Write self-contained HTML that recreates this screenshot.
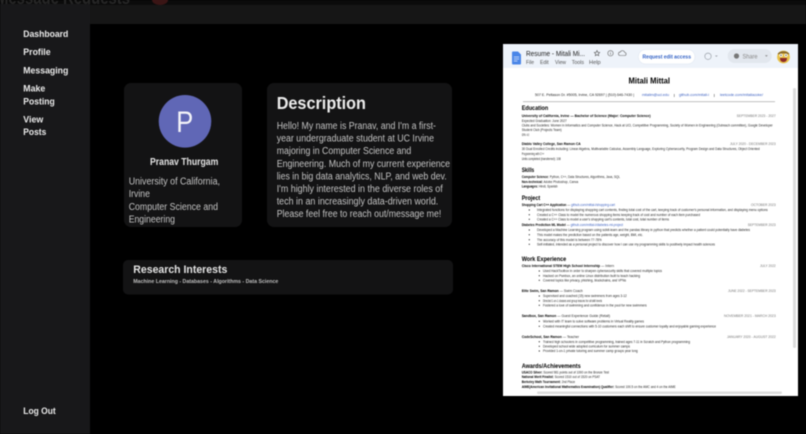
<!DOCTYPE html>
<html lang="en">
<head>
<meta charset="utf-8">
<title>Profile</title>
<style>
html,body{margin:0;padding:0;width:806px;height:434px;overflow:hidden;background:#000}
svg{display:block;position:absolute;left:0;top:0}
text{font-family:"Liberation Sans",sans-serif}
.main{filter:blur(.4px)}
.res{filter:blur(.4px)}
.b{font-weight:700;fill:#000;font-size:3.6px}
.t{fill:#1e1e1e;font-size:3.4px}
.d{fill:#777;font-size:3.3px}
.h{font-weight:700;fill:#000;font-size:6.6px}
.nav{font-weight:700;fill:#ececec;font-size:9.5px}
.body{fill:#c4c4c4;font-size:10px}
.m{fill:#555;font-size:5.8px}
</style>
</head>
<body>
<svg width="806" height="434" viewBox="0 0 806 434" xmlns="http://www.w3.org/2000/svg">
<g class="main">
<rect width="806" height="434" fill="#000"/>
<rect x="0" y="0" width="806" height="5" fill="#0b0b0b"/>
<text x="-4" y="4" font-size="19" font-weight="700" fill="#262626" textLength="134" lengthAdjust="spacingAndGlyphs">Message Requests</text>
<ellipse cx="160" cy="0" rx="8" ry="5" fill="#3a1515"/>
<rect x="90" y="5" width="716" height="19" fill="#161616"/>
<rect x="0" y="4" width="90" height="430" fill="#18181a"/>

<text class="nav" x="23.3" y="37.1" textLength="45" lengthAdjust="spacingAndGlyphs">Dashboard</text>
<text class="nav" x="23.3" y="55.1" textLength="27.3" lengthAdjust="spacingAndGlyphs">Profile</text>
<text class="nav" x="23.3" y="73.7" textLength="45" lengthAdjust="spacingAndGlyphs">Messaging</text>
<text class="nav" x="23.3" y="91.3" textLength="22" lengthAdjust="spacingAndGlyphs">Make</text>
<text class="nav" x="23.3" y="104.3" textLength="31.4" lengthAdjust="spacingAndGlyphs">Posting</text>
<text class="nav" x="23.3" y="122.3" textLength="20" lengthAdjust="spacingAndGlyphs">View</text>
<text class="nav" x="23.3" y="135.1" textLength="23" lengthAdjust="spacingAndGlyphs">Posts</text>
<text class="nav" x="23.3" y="414.1" textLength="32.4" lengthAdjust="spacingAndGlyphs">Log Out</text>

<rect x="124" y="83" width="118" height="144" rx="7" fill="#131314"/>
<circle cx="185" cy="121.3" r="26.3" fill="#6067b6"/>
<text x="176.2" y="131.8" font-size="30" fill="#f2f2f8" textLength="17" lengthAdjust="spacingAndGlyphs">P</text>
<text x="150" y="164.8" font-size="9.8" font-weight="700" fill="#e4e4e4" textLength="68.3" lengthAdjust="spacingAndGlyphs">Pranav Thurgam</text>
<text class="body" x="128.7" y="184.5" textLength="91.3" lengthAdjust="spacingAndGlyphs">University of California,</text>
<text class="body" x="128.7" y="197.1" textLength="21.3" lengthAdjust="spacingAndGlyphs">Irvine</text>
<text class="body" x="128.7" y="209.8" textLength="89.3" lengthAdjust="spacingAndGlyphs">Computer Science and</text>
<text class="body" x="128.7" y="222.5" textLength="46.3" lengthAdjust="spacingAndGlyphs">Engineering</text>

<rect x="267" y="83" width="185" height="144" rx="7" fill="#131314"/>
<text x="276.7" y="108.9" font-size="17.5" font-weight="700" fill="#ececec" textLength="89.3" lengthAdjust="spacingAndGlyphs">Description</text>
<text class="body" x="276.7" y="128.8" textLength="159.3" lengthAdjust="spacingAndGlyphs">Hello! My name is Pranav, and I'm a first-</text>
<text class="body" x="276.7" y="141.5" textLength="157.3" lengthAdjust="spacingAndGlyphs">year undergraduate student at UC Irvine</text>
<text class="body" x="276.7" y="154.1" textLength="134.6" lengthAdjust="spacingAndGlyphs">majoring in Computer Science and</text>
<text class="body" x="276.7" y="166.8" textLength="173.3" lengthAdjust="spacingAndGlyphs">Engineering. Much of my current experience</text>
<text class="body" x="276.7" y="179.5" textLength="170" lengthAdjust="spacingAndGlyphs">lies in big data analytics, NLP, and web dev.</text>
<text class="body" x="276.7" y="191.8" textLength="166" lengthAdjust="spacingAndGlyphs">I'm highly interested in the diverse roles of</text>
<text class="body" x="276.7" y="204.5" textLength="161.6" lengthAdjust="spacingAndGlyphs">tech in an increasingly data-driven world.</text>
<text class="body" x="276.7" y="217.1" textLength="164.6" lengthAdjust="spacingAndGlyphs">Please feel free to reach out/message me!</text>

<rect x="123" y="260" width="330" height="34.5" rx="5" fill="#131314"/>
<text x="133.3" y="272.8" font-size="10.8" font-weight="700" fill="#e4e4e4" textLength="94" lengthAdjust="spacingAndGlyphs">Research Interests</text>
<text x="133.3" y="282.8" font-size="5" font-weight="700" fill="#bdbdbd" textLength="145" lengthAdjust="spacingAndGlyphs">Machine Learning - Databases - Algorithms - Data Science</text>
</g>

<g class="res">
<rect x="503" y="44" width="295" height="352" fill="#fff"/>
<rect x="503" y="44" width="295" height="24" fill="#eef3fa"/>
<path d="M512 52.5a1 1 0 0 1 1-1h5l3 3v9a1 1 0 0 1-1 1h-7a1 1 0 0 1-1-1z" fill="#4a86e8"/>
<path d="M513.8 57h5.4M513.8 59h5.4M513.8 61h3.6" stroke="#dfe9fb" stroke-width=".7"/>
<text x="526" y="55.8" font-size="7.4" fill="#222" textLength="59" lengthAdjust="spacingAndGlyphs">Resume - Mitali Mi...</text>
<text class="m" x="526" y="64" textLength="8" lengthAdjust="spacingAndGlyphs">File</text>
<text class="m" x="540" y="64" textLength="8.7" lengthAdjust="spacingAndGlyphs">Edit</text>
<text class="m" x="555" y="64" textLength="11" lengthAdjust="spacingAndGlyphs">View</text>
<text class="m" x="571.7" y="64" textLength="12.3" lengthAdjust="spacingAndGlyphs">Tools</text>
<text class="m" x="589" y="64" textLength="11.7" lengthAdjust="spacingAndGlyphs">Help</text>
<path d="M597 50.5l.8 1.8 1.9.2-1.4 1.3.4 1.9-1.7-1-1.7 1 .4-1.9-1.4-1.3 1.9-.2z" fill="none" stroke="#555" stroke-width=".6"/>
<circle cx="610.5" cy="53.3" r="2.7" fill="none" stroke="#666" stroke-width=".6"/>
<path d="M610.5 52.8v2M610.5 51.7v.5" stroke="#666" stroke-width=".6"/>
<path d="M620 55.5h4.5a1.5 1.5 0 0 0 .2-3 2.3 2.3 0 0 0-4.4-.4 1.7 1.7 0 0 0-.3 3.4z" fill="none" stroke="#666" stroke-width=".6"/>
<rect x="638.3" y="49.5" width="56.7" height="14.5" rx="7.2" fill="#fff" stroke="#dbe3f0" stroke-width=".5"/>
<text x="642.5" y="58.5" font-size="5.8" font-weight="700" fill="#2f5fc4" textLength="48.5" lengthAdjust="spacingAndGlyphs">Request edit access</text>
<circle cx="708" cy="56.3" r="3.2" fill="none" stroke="#9aa0a8" stroke-width=".7"/>
<path d="M715 55.5l1.4 1.4 1.4-1.4" fill="#9aa0a8"/>
<rect x="727.7" y="49" width="44" height="14" rx="7" fill="#e2e7ee"/>
<circle cx="736.5" cy="56" r="2.6" fill="#777"/>
<text x="742.5" y="58.4" font-size="6" fill="#888" textLength="15" lengthAdjust="spacingAndGlyphs">Share</text>
<path d="M765 55.2l1.4 1.5 1.4-1.5" fill="#888"/>
<circle cx="783.5" cy="57" r="6.4" fill="#e8c24a"/>
<path d="M777.6 54c1.5-3.7 10.3-3.7 11.8 0l-1 .5c-2-1.5-7.8-1.5-9.8 0z" fill="#8a6a2a"/>
<circle cx="781" cy="55.3" r="1.6" fill="#fff"/><circle cx="786" cy="55.3" r="1.6" fill="#fff"/>
<circle cx="781" cy="55.3" r=".6" fill="#222"/><circle cx="786" cy="55.3" r=".6" fill="#222"/>
<path d="M780 58h7c0 3-1.5 4-3.5 4s-3.5-1-3.5-4z" fill="#8c2a2a"/>

<text x="628.5" y="83.5" font-size="7.8" font-weight="700" fill="#000" textLength="41.5" lengthAdjust="spacingAndGlyphs">Mitali Mittal</text>
<text class="t" x="535" y="96" textLength="99" lengthAdjust="spacingAndGlyphs">507 E. Peltason Dr. #5005, Irvine, CA 92697  |  (510) 646-7430  |</text>
<text class="t" x="642" y="96" textLength="27" lengthAdjust="spacingAndGlyphs" style="fill:#3a5fc0">mitalim@uci.edu</text>
<rect x="674" y="94" width=".4" height="3" fill="#333"/>
<text class="t" x="679" y="96" textLength="30" lengthAdjust="spacingAndGlyphs" style="fill:#3a5fc0">github.com/mitali-i</text>
<rect x="714" y="94" width=".4" height="3" fill="#333"/>
<text class="t" x="720" y="96" textLength="43" lengthAdjust="spacingAndGlyphs" style="fill:#3a5fc0">leetcode.com/mitaliacoke/</text>
<rect x="523" y="101.4" width="252" height=".6" fill="#999"/>

<text class="h" x="521.7" y="110.2" textLength="26.5" lengthAdjust="spacingAndGlyphs">Education</text>
<text class="b" x="521.7" y="116.8" textLength="129" lengthAdjust="spacingAndGlyphs">University of California, Irvine — Bachelor of Science (Major: Computer Science)</text>
<text class="d" x="736.7" y="116.8" textLength="39" lengthAdjust="spacingAndGlyphs">SEPTEMBER 2023 - 2027</text>
<text class="t" x="521.7" y="121.8" textLength="45" lengthAdjust="spacingAndGlyphs">Expected Graduation: June 2027</text>
<text class="t" x="521.7" y="126.4" textLength="251" lengthAdjust="spacingAndGlyphs">Clubs and Societies: Women in Informatics and Computer Science, Hack at UCI, Competitive Programming, Society of Women in Engineering (Outreach committee), Google Developer</text>
<text class="t" x="521.7" y="131.1" textLength="40" lengthAdjust="spacingAndGlyphs">Student Club (Projects Team)</text>
<text class="t" x="521.7" y="135.8" textLength="7.5" lengthAdjust="spacingAndGlyphs">GPA: 4.0</text>
<text class="b" x="521.7" y="145.1" textLength="59" lengthAdjust="spacingAndGlyphs">Diablo Valley College, San Ramon CA</text>
<text class="d" x="730" y="145.1" textLength="45.7" lengthAdjust="spacingAndGlyphs">JULY 2020 - DECEMBER 2023</text>
<text class="t" x="521.7" y="150.1" textLength="238" lengthAdjust="spacingAndGlyphs">30 Dual Enrolled Credits including: Linear Algebra, Multivariable Calculus, Assembly Language, Exploring Cybersecurity, Program Design and Data Structures, Object Oriented</text>
<text class="t" x="521.7" y="154.8" textLength="22.5" lengthAdjust="spacingAndGlyphs">Programming with C++</text>
<text class="t" x="521.7" y="159.8" textLength="39" lengthAdjust="spacingAndGlyphs">Units completed (transferred): 108</text>

<text class="h" x="521.7" y="172.2" textLength="12.5" lengthAdjust="spacingAndGlyphs">Skills</text>
<text class="t" x="521.7" y="178.1" textLength="98.3" lengthAdjust="spacingAndGlyphs"><tspan font-weight="700" fill="#000">Computer Science:</tspan> Python, C++, Data Structures, Algorithms, Java, SQL</text>
<text class="t" x="521.7" y="182.8" textLength="56.5" lengthAdjust="spacingAndGlyphs"><tspan font-weight="700" fill="#000">Non-technical:</tspan> Adobe Photoshop, Canva</text>
<text class="t" x="521.7" y="187.4" textLength="36" lengthAdjust="spacingAndGlyphs"><tspan font-weight="700" fill="#000">Languages:</tspan> Hindi, Spanish</text>

<text class="h" x="521.7" y="199.9" textLength="18.5" lengthAdjust="spacingAndGlyphs">Project</text>
<text class="t" x="521.7" y="206.1" textLength="93.3" lengthAdjust="spacingAndGlyphs"><tspan font-weight="700" fill="#000">Shopping Cart C++ Application</tspan> — <tspan fill="#3a5fc0">github.com/mittal-i/shopping-cart</tspan></text>
<text class="d" x="751" y="206.1" textLength="24.7" lengthAdjust="spacingAndGlyphs">OCTOBER 2023</text>
<g fill="#222"><circle cx="529.3" cy="210" r=".6"/><circle cx="529.3" cy="214.7" r=".6"/><circle cx="529.3" cy="219.3" r=".6"/><circle cx="529.3" cy="230" r=".6"/><circle cx="529.3" cy="234.7" r=".6"/><circle cx="529.3" cy="239.7" r=".6"/><circle cx="529.3" cy="244.3" r=".6"/>
<circle cx="539.3" cy="271" r=".6"/><circle cx="539.3" cy="275.7" r=".6"/><circle cx="539.3" cy="280.3" r=".6"/>
<circle cx="539.3" cy="296" r=".6"/><circle cx="539.3" cy="300.7" r=".6"/><circle cx="539.3" cy="305.3" r=".6"/>
<circle cx="539.3" cy="321.3" r=".6"/><circle cx="539.3" cy="326.3" r=".6"/>
<circle cx="539.3" cy="341.7" r=".6"/><circle cx="539.3" cy="346.3" r=".6"/><circle cx="539.3" cy="351" r=".6"/></g>
<text class="t" x="537" y="211.1" textLength="230.7" lengthAdjust="spacingAndGlyphs">Integrated functions for displaying shopping cart contents, finding total cost of the cart, keeping track of customer's personal information, and displaying menu options</text>
<text class="t" x="537" y="215.8" textLength="163" lengthAdjust="spacingAndGlyphs">Created a C++ Class to model the numerous shopping items keeping track of cost and number of each item purchased</text>
<text class="t" x="537" y="220.4" textLength="132" lengthAdjust="spacingAndGlyphs">Created a C++ Class to model a user's shopping cart's contents, total cost, total number of items</text>
<text class="t" x="521.7" y="226.1" textLength="101.3" lengthAdjust="spacingAndGlyphs"><tspan font-weight="700" fill="#000">Diabetes Prediction ML Model</tspan> — <tspan fill="#3a5fc0">github.com/mittal-i/diabetes-ml-project</tspan></text>
<text class="d" x="747.7" y="226.1" textLength="28" lengthAdjust="spacingAndGlyphs">SEPTEMBER 2023</text>
<text class="t" x="537" y="231.1" textLength="213" lengthAdjust="spacingAndGlyphs">Developed a Machine Learning program using scikit-learn and the pandas library in python that predicts whether a patient could potentially have diabetes</text>
<text class="t" x="537" y="235.8" textLength="106" lengthAdjust="spacingAndGlyphs">This model makes the prediction based on the patients age, weight, BMI, etc.</text>
<text class="t" x="537" y="240.8" textLength="64.7" lengthAdjust="spacingAndGlyphs">The accuracy of this model is between 77-78%</text>
<text class="t" x="537" y="245.4" textLength="178" lengthAdjust="spacingAndGlyphs">Self-initiated, intended as a personal project to discover how I can use my programming skills to positively impact health sciences</text>

<text class="h" x="521.7" y="260.9" textLength="44.5" lengthAdjust="spacingAndGlyphs">Work Experience</text>
<text class="t" x="521.7" y="266.8" textLength="92.3" lengthAdjust="spacingAndGlyphs"><tspan font-weight="700" fill="#000">Cisco International STEM High School Internship</tspan> — Intern</text>
<text class="d" x="760" y="266.8" textLength="15.7" lengthAdjust="spacingAndGlyphs">JULY 2022</text>
<text class="t" x="543" y="272.1" textLength="119" lengthAdjust="spacingAndGlyphs">Used HackToolbox in order to sharpen cybersecurity skills that covered multiple topics</text>
<text class="t" x="543" y="276.8" textLength="97" lengthAdjust="spacingAndGlyphs">Hacked on Pwnbox, an online Linux distribution built to teach hacking</text>
<text class="t" x="543" y="281.4" textLength="83" lengthAdjust="spacingAndGlyphs">Covered topics like privacy, phishing, blockchains, and VPNs</text>

<text class="t" x="521.7" y="291.8" textLength="61" lengthAdjust="spacingAndGlyphs"><tspan font-weight="700" fill="#000">Elite Swim, San Ramon</tspan> — Swim Coach</text>
<text class="d" x="728" y="291.8" textLength="47.7" lengthAdjust="spacingAndGlyphs">JUNE 2022 - SEPTEMBER 2023</text>
<text class="t" x="543" y="297.1" textLength="83.7" lengthAdjust="spacingAndGlyphs">Supervised and coached (15) new swimmers from ages 3-12</text>
<text class="t" x="543" y="301.8" textLength="59" lengthAdjust="spacingAndGlyphs">Directed 1-on-1 classes and group lessons for all skill levels</text>
<text class="t" x="543" y="306.4" textLength="103.7" lengthAdjust="spacingAndGlyphs">Fostered a love of swimming and confidence in the pool for new swimmers</text>

<text class="t" x="521.7" y="317.1" textLength="88.3" lengthAdjust="spacingAndGlyphs"><tspan font-weight="700" fill="#000">Sandbox, San Ramon</tspan> — Guest Experience Guide (Retail)</text>
<text class="d" x="724" y="317.1" textLength="51.7" lengthAdjust="spacingAndGlyphs">NOVEMBER 2021 - MARCH 2023</text>
<text class="t" x="543" y="322.4" textLength="101" lengthAdjust="spacingAndGlyphs">Worked with IT team to solve software problems in Virtual Reality games</text>
<text class="t" x="543" y="327.4" textLength="173" lengthAdjust="spacingAndGlyphs">Created meaningful connections with 5-10 customers each shift to ensure customer loyalty and enjoyable gaming experience</text>

<text class="t" x="521.7" y="337.8" textLength="57.3" lengthAdjust="spacingAndGlyphs"><tspan font-weight="700" fill="#000">CodeSchool, San Ramon</tspan> — Teacher</text>
<text class="d" x="727" y="337.8" textLength="48.7" lengthAdjust="spacingAndGlyphs">JANUARY 2020 - AUGUST 2022</text>
<text class="t" x="543" y="342.8" textLength="147" lengthAdjust="spacingAndGlyphs">Trained high schoolers in competitive programming, trained ages 7-11 in Scratch and Python programming</text>
<text class="t" x="543" y="347.4" textLength="87" lengthAdjust="spacingAndGlyphs">Developed school wide adopted curriculum for summer camps</text>
<text class="t" x="543" y="352.1" textLength="94.7" lengthAdjust="spacingAndGlyphs">Provided 1-on-1 private tutoring and summer camp groups year long</text>

<text class="h" x="521.7" y="367.9" textLength="59" lengthAdjust="spacingAndGlyphs">Awards/Achievements</text>
<text class="t" x="521.7" y="373.4" textLength="87.3" lengthAdjust="spacingAndGlyphs"><tspan font-weight="700" fill="#000">USACO Silver:</tspan> Scored 981 points out of 1000 on the Bronze Test</text>
<text class="t" x="521.7" y="378.1" textLength="78.3" lengthAdjust="spacingAndGlyphs"><tspan font-weight="700" fill="#000">National Merit Finalist:</tspan> Scored 1510 out of 1520 on PSAT</text>
<text class="t" x="521.7" y="382.8" textLength="53.3" lengthAdjust="spacingAndGlyphs"><tspan font-weight="700" fill="#000">Berkeley Math Tournament:</tspan> 2nd Place</text>
<text class="t" x="521.7" y="387.8" textLength="154" lengthAdjust="spacingAndGlyphs"><tspan font-weight="700" fill="#000">AIME(American Invitational Mathematics Examination) Qualifier:</tspan> Scored 100.5 on the AMC and 4 on the AIME</text>

<rect x="793" y="88" width="3" height="260" rx="1.5" fill="#dcdcdc"/>
<rect x="537" y="391.5" width="245" height="2.5" rx="1.2" fill="#dcdcdc"/>
</g>
</svg>
</body>
</html>
